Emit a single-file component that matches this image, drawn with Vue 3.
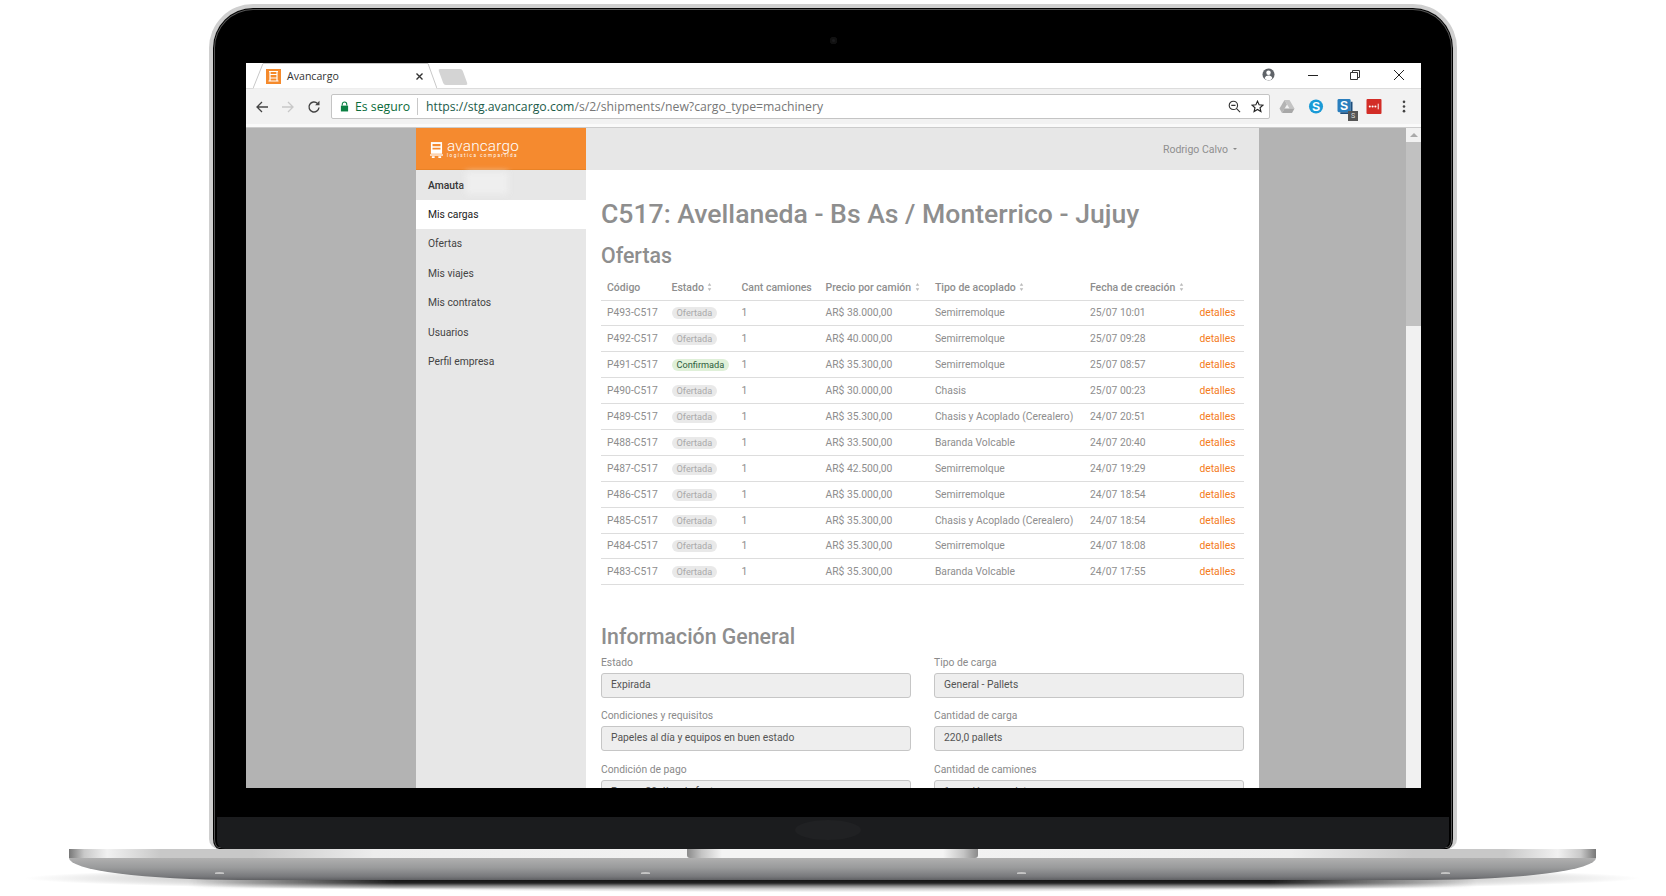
<script setup>
const menu = ['Mis cargas', 'Ofertas', 'Mis viajes', 'Mis contratos', 'Usuarios', 'Perfil empresa']

const heads = [
  { label: 'Código' },
  { label: 'Estado', sort: true },
  { label: 'Cant camiones' },
  { label: 'Precio por camión', sort: true },
  { label: 'Tipo de acoplado', sort: true },
  { label: 'Fecha de creación', sort: true },
  { label: '' }
]

const offers = [
  { code: 'P493-C517', state: 'Ofertada', price: 'AR$ 38.000,00', type: 'Semirremolque', date: '25/07 10:01' },
  { code: 'P492-C517', state: 'Ofertada', price: 'AR$ 40.000,00', type: 'Semirremolque', date: '25/07 09:28' },
  { code: 'P491-C517', state: 'Confirmada', price: 'AR$ 35.300,00', type: 'Semirremolque', date: '25/07 08:57' },
  { code: 'P490-C517', state: 'Ofertada', price: 'AR$ 30.000,00', type: 'Chasis', date: '25/07 00:23' },
  { code: 'P489-C517', state: 'Ofertada', price: 'AR$ 35.300,00', type: 'Chasis y Acoplado (Cerealero)', date: '24/07 20:51' },
  { code: 'P488-C517', state: 'Ofertada', price: 'AR$ 33.500,00', type: 'Baranda Volcable', date: '24/07 20:40' },
  { code: 'P487-C517', state: 'Ofertada', price: 'AR$ 42.500,00', type: 'Semirremolque', date: '24/07 19:29' },
  { code: 'P486-C517', state: 'Ofertada', price: 'AR$ 35.000,00', type: 'Semirremolque', date: '24/07 18:54' },
  { code: 'P485-C517', state: 'Ofertada', price: 'AR$ 35.300,00', type: 'Chasis y Acoplado (Cerealero)', date: '24/07 18:54' },
  { code: 'P484-C517', state: 'Ofertada', price: 'AR$ 35.300,00', type: 'Semirremolque', date: '24/07 18:08' },
  { code: 'P483-C517', state: 'Ofertada', price: 'AR$ 35.300,00', type: 'Baranda Volcable', date: '24/07 17:55' }
]

const fields = [
  { label: 'Estado', value: 'Expirada' },
  { label: 'Tipo de carga', value: 'General - Pallets' },
  { label: 'Condiciones y requisitos', value: 'Papeles al día y equipos en buen estado' },
  { label: 'Cantidad de carga', value: '220,0 pallets' },
  { label: 'Condición de pago', value: 'Pago a 30 días de factura' },
  { label: 'Cantidad de camiones', value: '1 camión completo' }
]
</script>

<template>
  <div class="stage">
    <div class="lid">
      <span class="camera"></span>
      <div class="screen">
        <div class="tabstrip">
          <div class="tab">
            <svg class="tab-shape" viewBox="0 0 184 26" preserveAspectRatio="none">
              <path d="M0 25.500L10 .5H175L184 25.500" fill="#fff" stroke="#c8c8c8" stroke-width="1" />
            </svg>
            <svg class="favicon" viewBox="0 0 15 15">
              <rect width="15" height="15" fill="#f58a2c" />
              <path d="M3 2.500h9M4 2.500v9M11 2.500v9M4 5.500h7M4 9h7M2.500 12h10" stroke="#fff" stroke-width="1.200" fill="none" />
            </svg>
            <span class="tab-title">Avancargo</span>
            <svg class="tab-close" viewBox="0 0 9 9">
              <path d="M1.500 1.500l6 6M7.500 1.500l-6 6" stroke="#333" stroke-width="1.400" />
            </svg>
          </div>
          <span class="newtab"></span>
          <div class="winctl">
            <svg class="profile" viewBox="0 0 14 14">
              <circle cx="7" cy="7" r="6.500" fill="#5f6368" />
              <circle cx="7" cy="5.200" r="2.400" fill="#fff" />
              <path d="M2.800 11c.8-2 2.400-2.800 4.200-2.800s3.400.8 4.200 2.800c-1 1.300-2.500 2.200-4.200 2.200S3.800 12.300 2.800 11z" fill="#fff" />
            </svg>
            <svg class="win-btn" viewBox="0 0 12 12">
              <path d="M1 6.500h10" stroke="#222" stroke-width="1" />
            </svg>
            <svg class="win-btn" viewBox="0 0 12 12">
              <path d="M1.500 3.500h7v7h-7zM3.500 3.500v-2h7v7h-2" stroke="#333" stroke-width="1" fill="none" />
            </svg>
            <svg class="win-btn" viewBox="0 0 12 12">
              <path d="M1 1l10 10M11 1L1 11" stroke="#222" stroke-width="1" />
            </svg>
          </div>
        </div>

        <div class="toolbar">
          <div class="nav">
            <svg viewBox="0 0 14 14"><path d="M13 7H2M7 2L2 7l5 5" stroke="#444" stroke-width="1.300" fill="none" /></svg>
            <svg viewBox="0 0 14 14"><path d="M1 7h11M7 2l5 5-5 5" stroke="#c8c8c8" stroke-width="1.300" fill="none" /></svg>
            <svg viewBox="0 0 14 14">
              <path d="M12 7.500A5 5 0 1 1 10.500 3.400" stroke="#444" stroke-width="1.400" fill="none" />
              <path d="M12.500 0.800v4.400H8.100z" fill="#444" />
            </svg>
          </div>
          <div class="omnibox">
            <svg class="lock" viewBox="0 0 10 12">
              <path d="M2.500 5V3.500a2.500 2.500 0 0 1 5 0V5" stroke="#0b8043" stroke-width="1.200" fill="none" />
              <rect x="1" y="5" width="8" height="6.500" fill="#0b8043" />
            </svg>
            <span class="secure">Es seguro</span>
            <span class="sep"></span>
            <span class="url"><span class="url-on">https://stg.avancargo.com</span>/s/2/shipments/new?cargo_type=machinery</span>
            <svg class="omni-icon zoom-ic" viewBox="0 0 14 14">
              <circle cx="5.800" cy="5.800" r="4.500" stroke="#333" stroke-width="1.200" fill="none" />
              <path d="M3.500 5.800h4.600M9 9l4 4" stroke="#333" stroke-width="1.200" />
            </svg>
            <svg class="omni-icon" viewBox="0 0 14 14">
              <path d="M7 1.200l1.700 3.900 4.200.4-3.200 2.800 1 4.100L7 10.200l-3.700 2.200 1-4.100L1.100 5.500l4.200-.4z" stroke="#222" stroke-width="1.200" fill="none" />
            </svg>
          </div>
          <div class="exts">
            <svg viewBox="0 0 16 14">
              <path d="M5.500 0.500h5l5 8.500h-5z" fill="#c4c4c4" />
              <path d="M5.500 0.500L0.500 9l2.500 4.500L8 5z" fill="#b4b4b4" />
              <path d="M3 13.500h10l2.500-4.500h-10z" fill="#a8a8a8" />
            </svg>
            <svg viewBox="0 0 16 16">
              <circle cx="8" cy="8" r="7.500" fill="#1a9ad6" />
              <text x="8" y="12.300" text-anchor="middle" class="ext-s">S</text>
            </svg>
            <span class="ext-stack">
              <svg viewBox="0 0 16 16">
                <rect width="14" height="14" rx="1.500" fill="#2a7ebd" />
                <path d="M14 3h2v13H3v-2h11z" fill="#1d4e7c" />
                <text x="7" y="12" text-anchor="middle" class="ext-s">S</text>
              </svg>
              <span class="ext-badge">S</span>
            </span>
            <svg viewBox="0 0 16 16">
              <rect width="16" height="16" rx="1" fill="#d32d27" />
              <circle cx="3.500" cy="8" r="1.100" fill="#fff" />
              <circle cx="6.500" cy="8" r="1.100" fill="#fff" />
              <circle cx="9.500" cy="8" r="1.100" fill="#fff" />
              <path d="M12.500 5v6" stroke="#fff" stroke-width="1" />
            </svg>
            <svg class="dots" viewBox="0 0 4 14">
              <circle cx="2" cy="2" r="1.400" fill="#444" />
              <circle cx="2" cy="7" r="1.400" fill="#444" />
              <circle cx="2" cy="12" r="1.400" fill="#444" />
            </svg>
          </div>
        </div>

        <div class="viewport">
          <div class="page">
            <aside class="sidebar">
              <div class="brand">
                <svg class="brand-icon" viewBox="0 0 14 17">
                  <path d="M1 0h12v2H1z" fill="#fff" />
                  <path d="M1 2h1.700v10.500H1zM11.300 2H13v10.500h-1.700zM2.700 4.500h8.600V6H2.700zM2.700 8h8.600v4.500H2.700z" fill="#fff" />
                  <path d="M0 13.200h14v1.400H0z" fill="#fff" />
                  <path d="M2 15.200h3V17H2zM9 15.200h3V17H9z" fill="#fff" />
                </svg>
                <div class="brand-text">
                  <span class="brand-name">avancargo</span>
                  <span class="brand-sub">logística compartida</span>
                </div>
              </div>
              <div class="company">
                Amauta
                <span class="smudge"></span>
              </div>
              <a v-for="(item, i) in menu" :key="item" class="menu-item" :class="{ active: i === 0 }">{{ item }}</a>
            </aside>

            <main class="content">
              <header class="topbar">
                <span class="user">Rodrigo Calvo</span>
                <span class="caret"></span>
              </header>
              <div class="body">
                <h1>C517: Avellaneda - Bs As / Monterrico - Jujuy</h1>
                <h2 class="offers-title">Ofertas</h2>
                <table>
                  <thead>
                    <tr>
                      <th v-for="h in heads" :key="h.label">
                        {{ h.label }}
                        <svg v-if="h.sort" class="sort" viewBox="0 0 5 9">
                          <path d="M2.500 0L4.500 3H.5zM2.500 9L.5 6h4z" fill="#bbb" />
                        </svg>
                      </th>
                    </tr>
                  </thead>
                  <tbody>
                    <tr v-for="o in offers" :key="o.code">
                      <td>{{ o.code }}</td>
                      <td><span class="badge" :class="{ ok: o.state === 'Confirmada' }">{{ o.state }}</span></td>
                      <td>1</td>
                      <td>{{ o.price }}</td>
                      <td>{{ o.type }}</td>
                      <td>{{ o.date }}</td>
                      <td><a class="details">detalles</a></td>
                    </tr>
                  </tbody>
                </table>

                <h2 class="info-title">Información General</h2>
                <div class="form">
                  <div v-for="f in fields" :key="f.label" class="field">
                    <label>{{ f.label }}</label>
                    <div class="input">{{ f.value }}</div>
                  </div>
                </div>
              </div>
            </main>
          </div>
          <div class="scrollbar">
            <span class="scroll-up"></span>
            <span class="thumb"></span>
          </div>
        </div>
      </div>
      <div class="chin">
        <span class="hinge"></span>
      </div>
    </div>

    <div class="base">
      <span class="notch"></span>
      <div class="base-top"></div>
      <div class="base-bottom">
        <span class="foot f1"></span>
        <span class="foot f2"></span>
        <span class="foot f3"></span>
        <span class="foot f4"></span>
      </div>
      <span class="shadow"></span>
      <span class="shadow-core"></span>
    </div>
  </div>
</template>

<style>
html,
body {
  background: #fff;
  overflow: hidden;
}
</style>

<style scoped>
.stage {
  width: 1666px;
  height: 896px;
  overflow: hidden;
  padding-top: 4px;
  box-sizing: border-box;
  font-family: Roboto, "Liberation Sans", sans-serif;
}

/* laptop */
.lid {
  position: relative;
  width: 1248px;
  height: 845px;
  margin-left: 209px;
  box-sizing: border-box;
  padding: 55px 32px 0 33px;
  border: 4px solid #cfcfcf;
  border-bottom: none;
  border-radius: 44px 44px 10px 10px;
  background: #000;
  box-shadow: inset 0 0 0 1px #000, inset 0 0 0 2px #555;
}

.camera {
  position: absolute;
  left: 617px;
  top: 29px;
  width: 7px;
  height: 7px;
  border-radius: 50%;
  background: #1c1c1e;
  box-shadow: inset 0 0 0 2px #111;
}

.screen {
  width: 1175px;
  height: 725px;
  overflow: hidden;
  background: #fff;
  display: flex;
  flex-direction: column;
}

.chin {
  position: relative;
  margin: 29px -28px 0 -29px;
  height: 32px;
  border-radius: 0 0 8px 8px;
  background: #1b1c1e;
}

.hinge {
  position: absolute;
  left: 578px;
  top: 3px;
  width: 66px;
  height: 20px;
  border-radius: 50%;
  background: #202123;
}

.base {
  position: relative;
  isolation: isolate;
  width: 1527px;
  margin-left: 69px;
}

.notch {
  position: absolute;
  z-index: 1;
  left: 618px;
  top: 0;
  width: 291px;
  height: 9px;
  background: linear-gradient(90deg, #8a8a8a, #c4c4c4 5%, #f4f4f4 12%, #f4f4f4 88%, #c4c4c4 95%, #8a8a8a);
  border-radius: 0 0 3px 3px;
}

.base-top {
  height: 9px;
  background: linear-gradient(90deg, #777 0, #c9c9c9 1%, #f1f1f1 2.500%, #c8c8c8 6%, #c8c8c8 12%, #ededed 20%, #f4f4f4 50%, #ededed 80%, #c8c8c8 88%, #c8c8c8 94%, #f1f1f1 97.500%, #c9c9c9 99%, #777 100%);
}

.base-bottom {
  position: relative;
  height: 22px;
  border-radius: 0 0 170px 170px / 0 0 22px 22px;
  background: linear-gradient(180deg, #b0b0b0 0, #999a9b 45%, #77787b 85%, #5f6063 100%);
}

.foot {
  position: absolute;
  top: 14px;
  width: 9px;
  height: 2px;
  border-radius: 50% 50% 0 0;
  background: #c4c4c4;
}

.f1 { left: 146px; }
.f2 { left: 572px; }
.f3 { left: 948px; }
.f4 { left: 1372px; }

.shadow {
  position: absolute;
  z-index: -1;
  left: -44px;
  right: -44px;
  top: 18px;
  height: 28px;
  background: radial-gradient(ellipse 50% 50% at 50% 40%, #bbb 0, #d4d4d4 80%, #ececec 92%, rgba(255, 255, 255, 0) 100%);
}

.shadow-core {
  position: absolute;
  z-index: -1;
  left: 120px;
  right: 120px;
  top: 30px;
  height: 10px;
  background: linear-gradient(180deg, #111 0, #222 40%, #888 70%, rgba(255, 255, 255, 0) 100%);
  -webkit-mask-image: linear-gradient(90deg, transparent, #000 16%, #000 84%, transparent);
  mask-image: linear-gradient(90deg, transparent, #000 16%, #000 84%, transparent);
}

/* browser chrome */
.tabstrip {
  height: 25px;
  display: flex;
  align-items: flex-start;
  background: #fff;
  border-bottom: 1px solid #dcdcdc;
  box-sizing: content-box;
}

.tab {
  position: relative;
  width: 184px;
  height: 26px;
  margin-left: 7px;
  padding: 0 13px;
  box-sizing: border-box;
  display: flex;
  align-items: center;
  gap: 6px;
  font-family: "Open Sans", "Noto Sans", sans-serif;
  font-size: 10.600px;
  color: #333;
}

.tab-shape {
  position: absolute;
  left: 0;
  top: 0;
  width: 100%;
  height: 100%;
}

.favicon,
.tab-title,
.tab-close {
  position: relative;
}

.favicon {
  width: 15px;
  height: 15px;
  flex: none;
}

.tab-title {
  flex: 1;
}

.tab-close {
  width: 9px;
  height: 9px;
}

.newtab {
  width: 24px;
  height: 16px;
  margin: 6px 0 0 4px;
  background: #d4d4d4;
  transform: skewX(20deg);
  border-radius: 2px;
}

.winctl {
  margin-left: auto;
  display: flex;
  align-items: center;
  padding-top: 6px;
}

.profile {
  width: 13px;
  height: 13px;
  margin-right: 32px;
  margin-top: -2px;
}

.win-btn {
  width: 12px;
  height: 12px;
  margin-right: 30px;
}

.win-btn:nth-child(3) {
  margin-right: 32px;
}

.win-btn:last-child {
  margin-right: 16px;
}

.toolbar {
  height: 35px;
  display: flex;
  align-items: center;
  background: #f2f2f2;
  border-bottom: 3px solid #fafafa;
}

.nav {
  width: 85px;
  padding-left: 9px;
  box-sizing: border-box;
  display: flex;
  gap: 12px;
}

.nav svg {
  width: 14px;
  height: 14px;
  flex: none;
}

.omnibox {
  width: 939px;
  height: 25px;
  box-sizing: border-box;
  display: flex;
  align-items: center;
  padding: 0 5px 0 8px;
  background: #fff;
  border: 1px solid #c4c4c4;
  border-radius: 2px;
  font-family: "Open Sans", "Noto Sans", sans-serif;
  font-size: 12.240px;
  white-space: nowrap;
}

.lock {
  width: 9px;
  height: 11px;
  flex: none;
  margin-right: 6px;
}

.secure {
  color: #0b6b3a;
}

.sep {
  width: 1px;
  height: 17px;
  margin: 0 8px 0 7px;
  background: #c8c8c8;
}

.url {
  color: #777;
  flex: 1;
}

.url-on {
  color: #1d5c4a;
}

.omni-icon {
  width: 13px;
  height: 13px;
  flex: none;
}

.zoom-ic {
  margin-right: 10px;
}

.exts {
  flex: 1;
  display: flex;
  align-items: center;
  padding-left: 9px;
  gap: 13px;
}

.exts > svg,
.ext-stack svg {
  width: 16px;
  height: 15px;
  flex: none;
  display: block;
}

.exts > svg.dots {
  width: 4px;
  height: 13px;
  margin-left: 7px;
}

.ext-stack {
  position: relative;
  display: block;
}

.ext-badge {
  position: absolute;
  right: -5px;
  bottom: -7px;
  width: 10px;
  height: 10px;
  background: #555;
  color: #ddd;
  font-size: 7px;
  line-height: 10px;
  text-align: center;
}

.ext-s {
  font-family: "Liberation Sans", sans-serif;
  font-weight: 700;
  font-size: 13px;
  fill: #fff;
}

/* page */
.viewport {
  flex: 1;
  min-height: 0;
  display: flex;
  background: #b3b3b3;
  border-top: 1px solid #ccc;
}

.page {
  flex: 1;
  display: flex;
  padding-left: 170px;
  padding-right: 147px;
  min-width: 0;
}

.sidebar {
  width: 170px;
  flex: none;
  background: #e7e7e7;
  color: #444;
  font-size: 10.320px;
}

.brand {
  height: 42px;
  box-sizing: border-box;
  padding: 2px 0 0 14px;
  display: flex;
  align-items: center;
  gap: 4px;
  background: #f58a2f;
  border-bottom: 1px solid #e98226;
}

.brand-icon {
  width: 13px;
  height: 16px;
  flex: none;
}

.brand-text {
  display: flex;
  flex-direction: column;
  color: #fff;
}

.brand-name {
  font-size: 15.300px;
  line-height: 13px;
  font-weight: 300;
  letter-spacing: 0.200px;
}

.brand-sub {
  font-size: 4.600px;
  line-height: 6px;
  letter-spacing: 1.450px;
  white-space: nowrap;
}

.company {
  position: relative;
  height: 30px;
  line-height: 31px;
  padding-left: 12px;
  font-weight: 500;
  color: #333;
}

.smudge {
  position: absolute;
  left: 50px;
  top: 2px;
  width: 42px;
  height: 22px;
  background: #efefef;
  filter: blur(3px);
}

.menu-item {
  display: block;
  height: 29.400px;
  line-height: 30px;
  padding-left: 12px;
}

.menu-item.active {
  background: #fff;
  color: #222;
}

.content {
  flex: 1;
  min-width: 0;
  background: #fff;
  color: #8e8e8e;
}

.topbar {
  height: 42px;
  padding-right: 22px;
  box-sizing: border-box;
  display: flex;
  align-items: center;
  justify-content: flex-end;
  gap: 5px;
  background: #e7e7e7;
  font-size: 10.500px;
  color: #8f8f8f;
}

.caret {
  width: 0;
  height: 0;
  border-left: 2.500px solid transparent;
  border-right: 2.500px solid transparent;
  border-top: 2.500px solid #888;
}

.body {
  padding: 0 15px;
}

h1,
h2 {
  margin: 0;
  font-weight: 500;
  color: #8e8e8e;
}

h1 {
  padding-top: 17px;
  font-size: 26.600px;
  line-height: 54px;
}

h2 {
  font-size: 21.300px;
  line-height: 30px;
}

table {
  width: 643px;
  margin-top: 4px;
  border-collapse: collapse;
  table-layout: fixed;
  font-size: 10.320px;
}

th:nth-child(1) { width: 64.500px; }
th:nth-child(2) { width: 70px; }
th:nth-child(3) { width: 84px; }
th:nth-child(4) { width: 109.400px; }
th:nth-child(5) { width: 155px; }
th:nth-child(6) { width: 109.500px; }

th {
  height: 25px;
  padding: 0 0 0 6px;
  box-sizing: border-box;
  text-align: left;
  font-size: 10.500px;
  font-weight: 500;
  white-space: nowrap;
  border-bottom: 1.500px solid #ddd;
}

td {
  height: 25.900px;
  padding: 0 0 0 6px;
  box-sizing: border-box;
  white-space: nowrap;
  border-bottom: 1px solid #ddd;
}

.sort {
  width: 5px;
  height: 8px;
  margin-left: 1px;
}

.badge {
  display: inline-block;
  height: 12px;
  line-height: 12px;
  padding: 0 5px;
  border-radius: 6px;
  background: #e9e9e9;
  color: #aaa;
  font-size: 9.200px;
}

.badge.ok {
  background: #dff0d8;
  color: #2e5c3c;
}

.details {
  color: #f47b20;
}

.info-title {
  margin-top: 36.600px;
}

.form {
  display: grid;
  grid-template-columns: 1fr 1fr;
  column-gap: 23px;
  width: 643px;
  margin-top: 1px;
}

.field {
  height: 53.500px;
}

label {
  display: block;
  height: 20px;
  line-height: 20px;
  font-size: 10.320px;
  color: #8a8a8a;
}

.input {
  height: 25px;
  line-height: 21px;
  box-sizing: border-box;
  padding-left: 9px;
  background: #eee;
  border: 1px solid #c6c6c6;
  border-radius: 3px;
  font-size: 10.320px;
  color: #555;
}

.scrollbar {
  width: 15px;
  flex: none;
  background: #f1f1f1;
  display: flex;
  flex-direction: column;
  align-items: center;
}

.scroll-up {
  margin-top: 5px;
  width: 0;
  height: 0;
  border-left: 4px solid transparent;
  border-right: 4px solid transparent;
  border-bottom: 4px solid #aaa;
}

.thumb {
  width: 100%;
  height: 184px;
  margin-top: 5px;
  background: #c1c1c1;
}
</style>
